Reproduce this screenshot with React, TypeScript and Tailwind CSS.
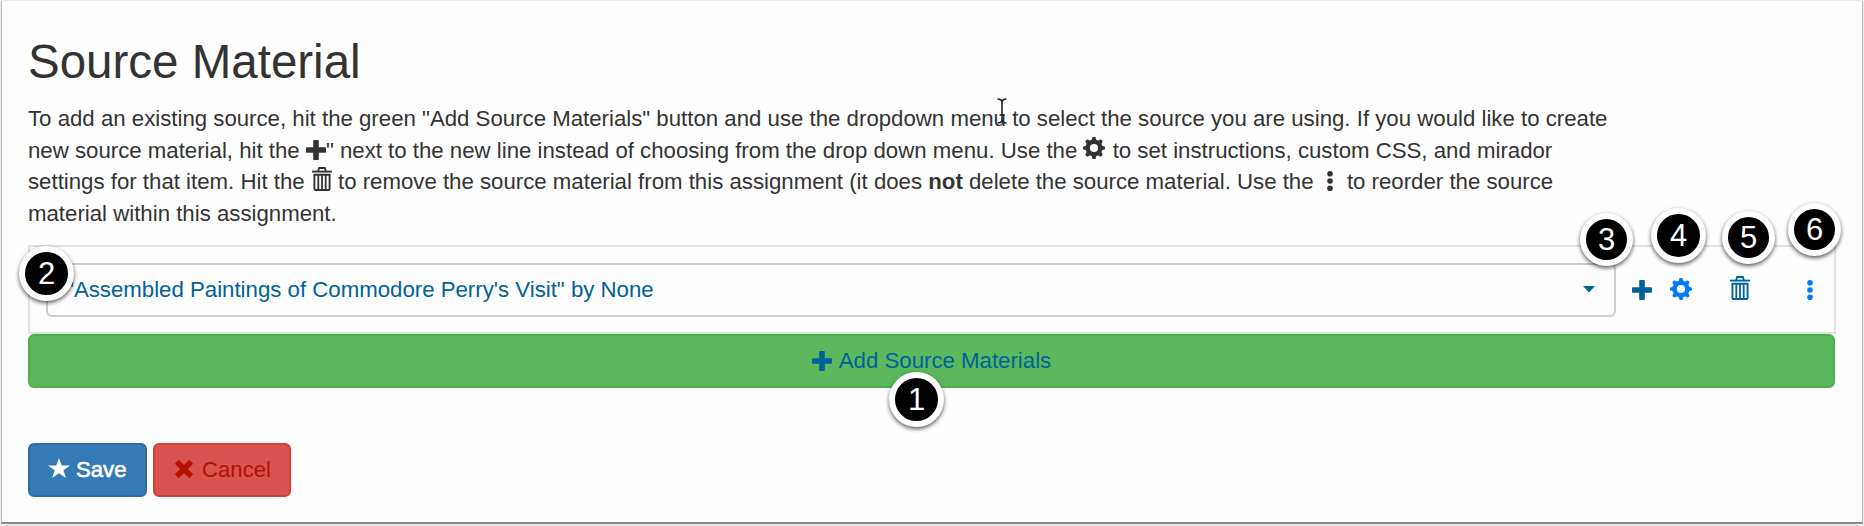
import React from "react";

const font = "font-['Liberation_Sans',Arial,sans-serif]";

function Plus({ className = "" }: { className?: string }) {
  return (
    <svg viewBox="0 0 20 20" fill="currentColor" className={className}>
      <path d="M8 0h4a.8.8 0 0 1 .8.8v6.4h6.4a.8.8 0 0 1 .8.8v4a.8.8 0 0 1-.8.8h-6.4v6.4a.8.8 0 0 1-.8.8H8a.8.8 0 0 1-.8-.8v-6.4H.8A.8.8 0 0 1 0 12V8a.8.8 0 0 1 .8-.8h6.4V.8A.8.8 0 0 1 8 0z" />
    </svg>
  );
}

function Trash({ className = "" }: { className?: string }) {
  return (
    <svg viewBox="0 0 20 24" fill="none" stroke="currentColor" className={className}>
      <path d="M0 4.6h20" strokeWidth="1.9" />
      <path d="M6.2 4.2 7 1h6l.8 3.2" strokeWidth="1.8" strokeLinejoin="round" />
      <path d="M2.4 7.8h15.2v13.6q0 1.6-1.6 1.6H4q-1.6 0-1.6-1.6z" strokeWidth="1.9" />
      <path d="M6.3 8v14.6M10 8v14.6M13.7 8v14.6" strokeWidth="1.8" />
    </svg>
  );
}

const teeth = [0, 45, 90, 135, 180, 225, 270, 315];

function Gear({ className = "" }: { className?: string }) {
  return (
    <svg viewBox="0 0 22 22" className={className}>
      <circle cx="11" cy="11" r="6.3" fill="none" stroke="currentColor" strokeWidth="4.4" />
      {teeth.map((a) => (
        <path key={a} transform={`rotate(${a} 11 11)`} fill="currentColor" d="M8.4 4.2 9.4.6q.2-.6.8-.6h1.6q.6 0 .8.6l1 3.6z" />
      ))}
    </svg>
  );
}

function Dots({ className = "" }: { className?: string }) {
  return (
    <svg viewBox="0 0 6 20" fill="currentColor" className={className}>
      <circle cx="3" cy="2.8" r="2.8" />
      <circle cx="3" cy="10" r="2.8" />
      <circle cx="3" cy="17.2" r="2.8" />
    </svg>
  );
}

function Marker({ n, className }: { n: number; className: string }) {
  return (
    <div className={`absolute flex items-center justify-center rounded-full border-[6px] border-white bg-black text-[31px] leading-none text-white shadow-[0_2px_4px_rgba(0,0,0,0.65)] ${className}`}>
      {n}
    </div>
  );
}

export default function App() {
  return (
    <div className={`h-[526px] w-[1864px] overflow-hidden bg-[#ececec] px-px pt-px ${font}`}>
      <main className="relative h-[523px] border-x border-b-2 border-x-[#bcbcbc] border-b-[#8a8a8a] bg-[#fefefe] pl-[26px] pr-[26px] pt-[32px] text-[#333]">
        <h1 className="h-[70px] whitespace-nowrap text-[47.5px] leading-[57px]">Source Material</h1>
        <div className="h-[127px] whitespace-nowrap text-[22.22px] leading-[31.67px]">
          <p>To add an existing source, hit the green "Add Source Materials" button and use the dropdown menu to select the source you are using. If you would like to create</p>
          <p>new source material, hit the <Plus className="inline-block size-5 align-[-2px]" />" next to the new line instead of choosing from the drop down menu. Use the <Gear className="mr-px inline-block size-[22px] align-[-1px]" /> to set instructions, custom CSS, and mirador</p>
          <p>settings for that item. Hit the <Trash className="ml-px inline-block h-6 w-5 align-[-2px]" /> to remove the source material from this assignment (it does <b>not</b> delete the source material. Use the <Dots className="ml-[7px] mr-[8px] inline-block h-5 w-[6px] align-[-2px]" /> to reorder the source</p>
          <p>material within this assignment.</p>
        </div>
        <section className="mt-[15px] flex h-[89px] w-[1808px] items-center border-2 border-[#e2e2e2] pl-4">
          <div className="flex h-[54px] w-[1570px] items-center justify-between rounded-md border-2 border-[#ccc] pl-[18px] pr-[19px] text-[22.22px] text-[#00629b]">
            <span className="whitespace-nowrap">"Assembled Paintings of Commodore Perry's Visit" by None</span>
            <svg viewBox="0 0 12 7" className="h-[7px] w-3" fill="currentColor"><path d="M0 0h12L6 6.5z" /></svg>
          </div>
          <Plus className="ml-4 size-5 text-[#00629b]" />
          <Gear className="mb-[2px] ml-[18px] size-[22px] text-[#007bff]" />
          <Trash className="mb-[3px] ml-[38px] h-6 w-5 text-[#00629b]" />
          <Dots className="ml-[57px] h-5 w-[6px] text-[#007bff]" />
        </section>
        <button className="flex h-[54px] w-[1807px] items-center justify-center gap-[7px] rounded-md border-2 border-[#4cae4c] bg-[#5cb85c] text-[22.22px] text-[#00629b]">
          <Plus className="size-5" />
          <span>Add Source Materials</span>
        </button>
        <div className="mt-[55px] flex gap-[6px] text-[22.17px]">
          <button className="flex h-[54px] w-[119px] items-center gap-[6px] rounded-md border-2 border-[#2e6da4] bg-[#337ab7] pl-[18px] text-white">
            <svg viewBox="0 0 22 20" className="mb-[4px] h-5 w-[22px]" fill="currentColor"><path d="m11 0 2.7 7.4H22l-6.6 4.8 2.5 7.8-6.9-4.8L4.1 20l2.5-7.8L0 7.4h8.3z" /></svg>
            <span className="[-webkit-text-stroke:0.6px_white]">Save</span>
          </button>
          <button className="flex h-[54px] w-[138px] items-center gap-[9px] rounded-md border-2 border-[#d43f3a] bg-[#d9534f] pl-5 text-[#b51200]">
            <svg viewBox="0 0 18 18" className="mb-[3px] size-[18px]" fill="currentColor"><path d="m4.2.3 4.8 4.8L13.8.3q.5-.5 1 0l2.9 2.9q.5.5 0 1L12.9 9l4.8 4.8q.5.5 0 1l-2.9 2.9q-.5.5-1 0L9 12.9l-4.8 4.8q-.5.5-1 0L.3 14.8q-.5-.5 0-1L5.1 9 .3 4.2q-.5-.5 0-1L3.2.3q.5-.5 1 0z" /></svg>
            <span>Cancel</span>
          </button>
        </div>
        <svg viewBox="0 0 10 26" className="absolute left-[995px] top-[97px] h-[26px] w-[10px]" fill="none" stroke="#222" strokeWidth="1.6">
          <path d="M.5 1Q5 1 5 4.5v17Q5 25 .5 25M9.5 1Q5 1 5 4.5v17Q5 25 9.5 25M2.5 17h5" />
        </svg>
        <Marker n={1} className="left-[887px] top-[371px] size-[55px]" />
        <Marker n={2} className="left-[17px] top-[245px] size-[55px]" />
        <Marker n={3} className="left-[1578px] top-[212px] size-[53px]" />
        <Marker n={4} className="left-[1649px] top-[207px] size-[55px]" />
        <Marker n={5} className="left-[1720px] top-[210px] size-[53px]" />
        <Marker n={6} className="left-[1786px] top-[202px] size-[53px]" />
      </main>
    </div>
  );
}
